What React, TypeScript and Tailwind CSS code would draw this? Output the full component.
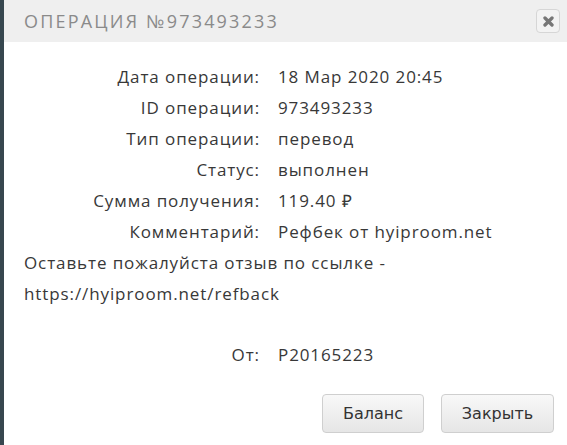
import React from 'react';

const rows = [
  { label: 'Дата операции:', value: '18 Мар 2020 20:45' },
  { label: 'ID операции:', value: '973493233' },
  { label: 'Тип операции:', value: 'перевод' },
  { label: 'Статус:', value: 'выполнен' },
  { label: 'Сумма получения:', value: '119.40 ₽' },
  { label: 'Комментарий:', value: 'Рефбек от hyiproom.net' },
];

const Row = ({ label, value }: { label: string; value: string }) => (
  <div className="flex h-[31px] items-center">
    <div className="w-[256px] shrink-0 text-right">{label}</div>
    <div className="pl-[18px]">{value}</div>
  </div>
);

export default function App() {
  return (
    <div className="flex h-[445px] w-[567px] bg-white" style={{ fontFamily: '"Open Sans", "Liberation Sans", sans-serif' }}>
      {/* left edge of the page behind */}
      <div className="w-[4px] shrink-0 bg-[#37474f]" />
      <div className="flex flex-1 flex-col">
        {/* header */}
        <div className="flex h-[42px] items-center justify-between bg-[#efefef] pl-[20px] pr-[7px]">
          <div className="text-[18px] tracking-[2.2px] text-[#8a8a8a]">ОПЕРАЦИЯ №973493233</div>
          <button className="flex h-[24px] w-[24px] items-center justify-center rounded-[4px] border border-[#d6d6d6] bg-[#f3f3f3]">
            <svg width="11" height="11" viewBox="0 0 10 10">
              <path d="M1.8 1.8 L8.2 8.2 M8.2 1.8 L1.8 8.2" stroke="#777" strokeWidth="3" strokeLinecap="round" />
            </svg>
          </button>
        </div>
        {/* body */}
        <div className="flex-1 pt-[19px] text-[17px] tracking-[0.9px] text-[#383838]">
          {rows.map((r) => (
            <Row key={r.label} label={r.label} value={r.value} />
          ))}
          <div className="pl-[20px] leading-[31px]">
            <div>Оставьте пожалуйста отзыв по ссылке -</div>
            <div>https://hyiproom.net/refback</div>
          </div>
          <div className="mt-[30px]">
            <Row label="От:" value="P20165223" />
          </div>
        </div>
        {/* footer */}
        <div
          className="flex justify-end gap-[17px] pb-[12px] pr-[13px]"
          style={{ fontFamily: '"DejaVu Sans", Verdana, sans-serif' }}
        >
          <button className="h-[39px] w-[102px] rounded-[4px] border border-[#cfcfcf] bg-gradient-to-b from-[#f8f8f8] to-[#e6e6e6] text-[16px] text-[#333]">
            Баланс
          </button>
          <button className="h-[39px] w-[113px] rounded-[4px] border border-[#cfcfcf] bg-gradient-to-b from-[#f8f8f8] to-[#e6e6e6] text-[16px] text-[#333]">
            Закрыть
          </button>
        </div>
      </div>
    </div>
  );
}
